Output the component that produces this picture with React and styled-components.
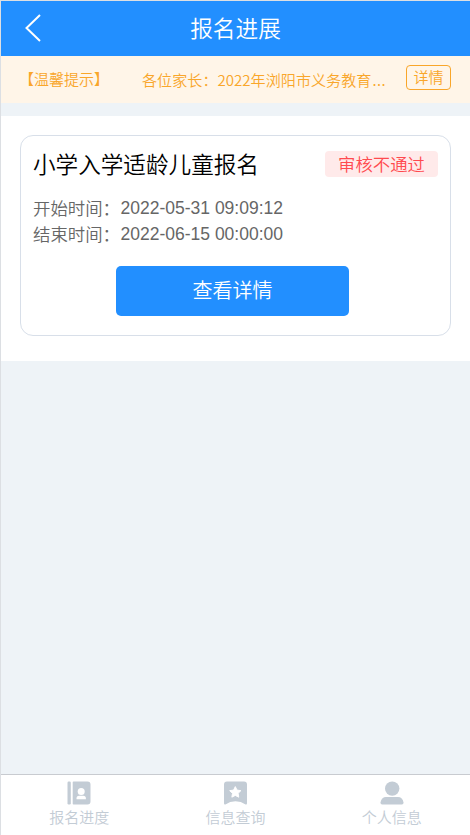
import React from "react";
import styled, { createGlobalStyle } from "styled-components";

const Global = createGlobalStyle`
  * { box-sizing: border-box; }
  body { margin: 0; }
`;

const Page = styled.div`
  display: flex;
  flex-direction: column;
  height: 100vh;
  border-top: 1px solid #dcdfe3;
  border-left: 1px solid #dcdfe3;
  background: #eef3f7;
  font-family: "Liberation Sans", "Noto Sans CJK SC DemiLight", "Noto Sans CJK SC", sans-serif;
  font-weight: 350;
  overflow: hidden;
  white-space: nowrap;
`;

const Header = styled.header`
  display: grid;
  grid-template-columns: 60px 1fr 60px;
  align-items: center;
  flex: none;
  height: 55px;
  background: #228fff;
  color: #fff;
`;

const BackButton = styled.button`
  display: flex;
  padding: 0 0 2px 23px;
  border: 0;
  background: none;
  color: inherit;
`;

const Title = styled.h1`
  margin: 0;
  font-size: 22.7px;
  font-weight: inherit;
  line-height: 55px;
  padding-top: 1px;
  height: 55px;
  text-align: center;
`;

const Notice = styled.section`
  display: flex;
  align-items: center;
  flex: none;
  height: 47px;
  padding: 0 19px 0 18px;
  background: #fff5e8;
  color: #f9a62a;
  font-family: "Noto Sans CJK SC DemiLight", "Noto Sans CJK SC", sans-serif;
  font-size: 15px;
  line-height: 24px;
`;

const NoticeLabel = styled.span`
  flex: none;
  width: 123px;
  margin-top: -1px;
`;

const NoticeText = styled.span`
  flex: none;
  width: 248px;
  margin-top: -2px;
  overflow: hidden;
  font-size: 15.1px;
`;

const Ellipsis = styled.span`
  margin-left: 1px;
  letter-spacing: 0.5px;
`;

const NoticeLink = styled.button`
  width: 45px;
  height: 25px;
  margin: -4px 0 0 auto;
  padding: 0 0 2px;
  border: 1px solid #f9a62a;
  border-radius: 4px;
  background: none;
  color: inherit;
  font: inherit;
  line-height: 21px;
`;

const Panel = styled.main`
  flex: none;
  height: 245px;
  margin-top: 13px;
  padding: 19px 19px 25px;
  background: #fff;
`;

const Card = styled.article`
  display: flex;
  flex-direction: column;
  height: 201px;
  padding: 12px 12px 19px;
  border: 1px solid #d8dfe9;
  border-radius: 13px;
`;

const CardHead = styled.div`
  display: flex;
  align-items: center;
  justify-content: space-between;
  height: 32px;
`;

const CardTitle = styled.h2`
  margin: 0;
  padding-top: 3px;
  color: #000;
  font-size: 22.6px;
  font-weight: inherit;
  line-height: 32px;
`;

const Status = styled.span`
  width: 113px;
  height: 26px;
  border-radius: 4px;
  background: #ffeaea;
  color: #ff4a4f;
  font-size: 17.4px;
  line-height: 28px;
  text-align: center;
`;

const Times = styled.div`
  margin-top: 16px;
  color: #666;
  font-size: 17.4px;
  line-height: 26px;
`;

const TimeRow = styled.div`
  display: flex;
  height: 26px;
`;

const TimeLabel = styled.span`
  width: 87.5px;
`;

const TimeValue = styled.span`
  font-family: "Liberation Sans", sans-serif;
  font-size: 17.5px;
  font-weight: 400;
  line-height: 24px;
`;

const PrimaryButton = styled.button`
  align-self: center;
  width: 233px;
  height: 50px;
  margin: auto 6px 0 0;
  padding: 0;
  border: 0;
  border-radius: 5px;
  background: #228fff;
  color: #fff;
  font-family: inherit;
  font-size: 20px;
  font-weight: inherit;
  line-height: 48px;
`;

const TabBar = styled.nav`
  display: grid;
  grid-template-columns: repeat(3, 1fr);
  flex: none;
  height: 61px;
  margin-top: auto;
  border-top: 1px solid #c8cbd0;
  background: #fff;
`;

const Tab = styled.a`
  display: flex;
  flex-direction: column;
  align-items: center;
  padding-top: 6px;
  color: #c3ccd5;
  font-size: 15px;
  line-height: 26px;
`;

const TabIcon = styled.svg`
  display: block;
  flex: none;
  width: 24px;
  height: 24px;
  fill: currentColor;
`;

const BookIcon = () => (
  <TabIcon viewBox="0 0 24 24">
    <rect x="0.5" y="0.5" width="3.3" height="23" rx="1.2" />
    <path d="M6.500 .5h14a3 3 0 0 1 3 3v17a3 3 0 0 1-3 3h-14q-.8 0-.8-.8V1.300q0-.8.8-.8Z" />
    <circle cx="14.2" cy="10.4" r="3.5" fill="#fff" />
    <path fill="#fff" d="M9.500 18.200v-.8q0-2.600 2.600-2.600h4.200q2.600 0 2.600 2.600v.8Z" />
  </TabIcon>
);

const BookmarkIcon = () => (
  <TabIcon viewBox="-0.5 0 24 24">
    <path d="M3.500.5h17a3 3 0 0 1 3 3v18.800q0 1.500-1.400 1.100Q17.500 20.200 12 20.200T1.900 23.400Q.5 23.800.5 22.300V3.500a3 3 0 0 1 3-3Z" />
    <path fill="#fff" stroke="#fff" strokeLinejoin="round" d="m11.800 5.600 1.700 3.500 3.900.55-2.800 2.700.65 3.850-3.450-1.820-3.450 1.820.65-3.850-2.800-2.700 3.900-.55Z" />
  </TabIcon>
);

const PersonIcon = () => (
  <TabIcon viewBox="0 0 24 24">
    <circle cx="12.2" cy="7.6" r="7.2" />
    <path d="M6 16h12q4.500 0 5.500 5.500.2 2-1.700 2H2.200q-1.900 0-1.700-2Q1.500 16 6 16Z" />
  </TabIcon>
);

const tabs = [
  { label: "报名进度", Icon: BookIcon },
  { label: "信息查询", Icon: BookmarkIcon },
  { label: "个人信息", Icon: PersonIcon },
];

const times = [
  { label: "开始时间：", value: "2022-05-31 09:09:12" },
  { label: "结束时间：", value: "2022-06-15 00:00:00" },
];

export default function App() {
  return (
    <Page>
      <Global />
      <Header>
        <BackButton aria-label="返回">
          <svg width="18" height="30" viewBox="0 0 18 30" fill="none" stroke="currentColor" strokeWidth="2">
            <path d="M16 2 2.500 15 16 28" />
          </svg>
        </BackButton>
        <Title>报名进展</Title>
      </Header>
      <Notice>
        <NoticeLabel>【温馨提示】</NoticeLabel>
        <NoticeText>
          各位家长：2022年浏阳市义务教育<Ellipsis>...</Ellipsis>
        </NoticeText>
        <NoticeLink>详情</NoticeLink>
      </Notice>
      <Panel>
        <Card>
          <CardHead>
            <CardTitle>小学入学适龄儿童报名</CardTitle>
            <Status>审核不通过</Status>
          </CardHead>
          <Times>
            {times.map(({ label, value }) => (
              <TimeRow key={label}>
                <TimeLabel>{label}</TimeLabel>
                <TimeValue>{value}</TimeValue>
              </TimeRow>
            ))}
          </Times>
          <PrimaryButton>查看详情</PrimaryButton>
        </Card>
      </Panel>
      <TabBar>
        {tabs.map(({ label, Icon }) => (
          <Tab key={label}>
            <Icon />
            {label}
          </Tab>
        ))}
      </TabBar>
    </Page>
  );
}
